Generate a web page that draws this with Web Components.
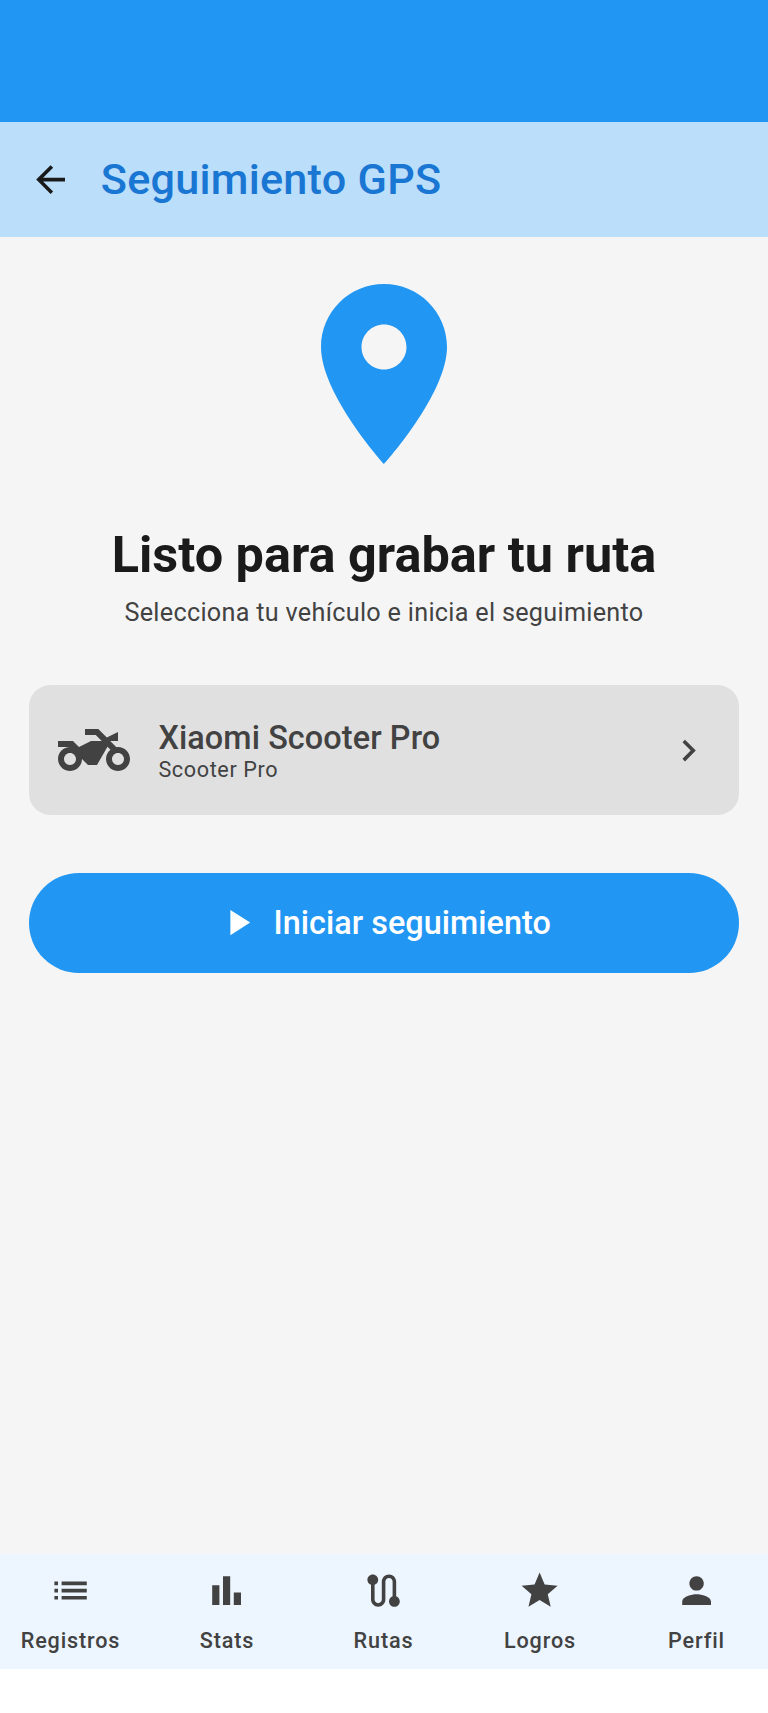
<!DOCTYPE html>
<html lang="es">
<head>
<meta charset="utf-8">
<title>Seguimiento GPS</title>
<style>
html, body { margin: 0; height: 100%; }
body { font-family: Roboto, "Noto Sans", sans-serif; background: #fff; overflow: hidden; }
</style>
</head>
<body>
<gps-screen>
  <top-bar slot="top">Seguimiento GPS</top-bar>
  <ready-hero>Listo para grabar tu ruta<span slot="sub">Selecciona tu vehículo e inicia el seguimiento</span></ready-hero>
  <vehicle-card>Xiaomi Scooter Pro<span slot="model">Scooter Pro</span></vehicle-card>
  <start-button>Iniciar seguimiento</start-button>
  <nav-bar slot="bottom">
    <nav-item icon="list">Registros</nav-item>
    <nav-item icon="bars">Stats</nav-item>
    <nav-item icon="route">Rutas</nav-item>
    <nav-item icon="star">Logros</nav-item>
    <nav-item icon="person">Perfil</nav-item>
  </nav-bar>
</gps-screen>
<script>
const ICONS = {
  back: 'M20 11H7.83l5.59-5.59L12 4l-8 8 8 8 1.41-1.41L7.83 13H20v-2z',
  pin: 'M12 2C8.13 2 5 5.13 5 9c0 5.25 7 13 7 13s7-7.75 7-13c0-3.87-3.13-7-7-7zm0 9.5c-1.38 0-2.5-1.12-2.5-2.5s1.12-2.5 2.5-2.5 2.5 1.12 2.5 2.5-1.12 2.5-2.5 2.5z',
  moto: 'M20 11c-.18 0-.36.03-.53.05L17.41 9H20V6l-3.72 1.86L13.41 5H9v2h3.59l2 2H11l-4 2-2-2H0v2h4c-2.21 0-4 1.79-4 4s1.79 4 4 4 4-1.79 4-4l2 2h3l3.49-6.1 1.01 1.01c-.91.73-1.5 1.84-1.5 3.09 0 2.21 1.79 4 4 4s4-1.79 4-4-1.79-4-4-4zM4 17c-1.1 0-2-.9-2-2s.9-2 2-2 2 .9 2 2-.9 2-2 2zm16 0c-1.1 0-2-.9-2-2s.9-2 2-2 2 .9 2 2-.9 2-2 2z',
  chevron: 'M10 6L8.59 7.41 13.17 12l-4.58 4.59L10 18l6-6z',
  play: 'M8 5v14l11-7z',
  list: 'M3 13h2v-2H3zm0 4h2v-2H3zm0-8h2V7H3zm4 4h14v-2H7zm0 4h14v-2H7zM7 7v2h14V7z',
  bars: 'M4 9h4v11H4zm12 4h4v7h-4zm-6-9h4v16h-4z',
  route: 'M19 15.18V7c0-2.21-1.79-4-4-4s-4 1.79-4 4v10c0 1.1-.9 2-2 2s-2-.9-2-2V8.82C8.16 8.4 9 7.3 9 6c0-1.66-1.34-3-3-3S3 4.34 3 6c0 1.3.84 2.4 2 2.82V17c0 2.21 1.79 4 4 4s4-1.79 4-4V7c0-1.1.9-2 2-2s2 .9 2 2v8.18c-1.16.41-2 1.51-2 2.82 0 1.66 1.34 3 3 3s3-1.34 3-3c0-1.3-.84-2.4-2-2.82z',
  star: 'M12 17.27L18.18 21l-1.64-7.03L22 9.24l-7.19-.61L12 2 9.19 8.63 2 9.24l5.46 4.73L5.82 21z',
  person: 'M12 12c2.21 0 4-1.79 4-4s-1.79-4-4-4-4 1.79-4 4 1.79 4 4 4zm0 2c-2.67 0-8 1.34-8 4v2h16v-2c0-2.66-5.33-4-8-4z'
};
function define(name, css, html) {
  customElements.define(name, class extends HTMLElement {
    constructor() {
      super();
      this.attachShadow({ mode: 'open' }).innerHTML =
        '<style>' + css + '</style>' + (typeof html === 'function' ? html(this) : html);
    }
  });
}
define('md-icon',
  ':host{display:block;flex:none;width:var(--size,43.2px);height:var(--size,43.2px)} svg{display:block;width:100%;height:100%;fill:currentColor}',
  el => '<svg viewBox="0 0 24 24" aria-hidden="true"><path d="' + ICONS[el.getAttribute('name')] + '"/></svg>');
define('gps-screen',
  `:host{display:flex;flex-direction:column;height:1713px;box-sizing:border-box}
   .status{flex:none;height:122.2px;background:#2196f3}
   main{flex:1;background:#f5f5f5;padding:29px 28.8px;display:flex;flex-direction:column}
   .gesture{flex:none;height:44px;background:#fff}`,
  '<div class="status"></div><slot name="top"></slot><main><slot></slot></main><slot name="bottom"></slot><div class="gesture"></div>');
define('top-bar',
  `:host{display:flex;align-items:center;flex:none;height:115.2px;box-sizing:border-box;padding-left:28.8px;gap:28.8px;background:#bbdefb;color:#1976d2}
   md-icon{color:#1a1a1a}
   h1{margin:0;font-size:43.2px;line-height:57.6px;font-weight:500;letter-spacing:.25px}`,
  '<md-icon name="back"></md-icon><h1><slot></slot></h1>');
define('ready-hero',
  `:host{display:flex;flex-direction:column;align-items:center;text-align:center}
   md-icon{--size:216px;color:#2196f3}
   h2{margin:40.8px 0 0;font-size:50.4px;line-height:64.8px;font-weight:700;color:#1a1a1a}
   p{margin:7px 0 0;font-size:25.2px;line-height:36px;letter-spacing:.3px;color:#424242}`,
  '<md-icon name="pin"></md-icon><h2><slot></slot></h2><p><slot name="sub"></slot></p>');
define('vehicle-card',
  `:host{display:flex;align-items:center;height:129.6px;box-sizing:border-box;margin-top:54.4px;padding:0 28.8px;border-radius:21.6px;background:#e0e0e0;color:#424242}
   .moto{--size:72px} div{flex:1;margin-left:28.8px;padding-top:3.6px}
   b{display:block;font-size:32.4px;line-height:36px;font-weight:500;letter-spacing:.1px}
   small{display:block;font-size:21.6px;line-height:28.8px;letter-spacing:.62px}`,
  '<md-icon class="moto" name="moto"></md-icon><div><b><slot></slot></b><small><slot name="model"></slot></small></div><md-icon name="chevron"></md-icon>');
define('start-button',
  `:host{display:block;margin-top:57.6px}
   button{display:flex;align-items:center;justify-content:center;gap:14.4px;width:100%;height:100.8px;border:0;padding:0 1.2px 0 0;border-radius:50.4px;background:#2196f3;color:#fff;font:500 32.4px/43.2px Roboto,sans-serif;letter-spacing:.02px}
   span{padding-top:2px}`,
  '<button><md-icon name="play"></md-icon><span><slot></slot></span></button>');
define('nav-bar',
  ':host{display:grid;grid-template-columns:repeat(5,142px);column-gap:14.5px;flex:none;height:115.2px;box-sizing:border-box;background:#edf5ff;color:#424242}',
  '<slot></slot>');
define('nav-item',
  `:host{display:flex;flex-direction:column;align-items:center;padding:15px 1px 0 0}
   span{margin-top:15px;font-size:21.6px;line-height:28.8px;font-weight:500;letter-spacing:.85px;color:#424242}`,
  el => '<md-icon name="' + el.getAttribute('icon') + '"></md-icon><span><slot></slot></span>');
</script>
</body>
</html>
